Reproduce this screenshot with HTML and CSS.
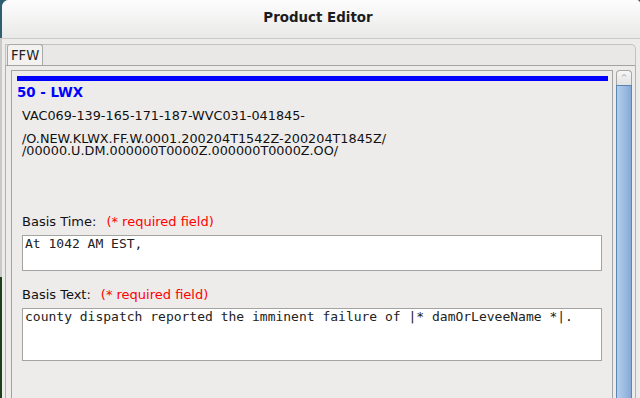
FILE: index.html
```html
<!DOCTYPE html>
<html lang="en">
<head>
    <title>Product Editor</title>
    <meta charset="utf-8">
    <link rel="stylesheet" href="styles.css">
</head>
<body>
    <div class="screen">
        <div class="edge">
            <div class="edge-top"></div>
            <div class="edge-mid"></div>
            <div class="edge-bottom"></div>
        </div>

        <div class="dialog">
            <div class="titlebar">Product Editor</div>

            <div class="tabs">
                <div class="tabbar">
                    <div class="tab">FFW</div>
                </div>

                <div class="tabpanel">
                    <div class="scroller">
                        <div class="content">
                            <div class="bar"></div>
                            <div class="segment">50 - LWX</div>
                            <div class="ugc">VAC069-139-165-171-187-WVC031-041845-</div>
                            <div class="vtec">/O.NEW.KLWX.FF.W.0001.200204T1542Z-200204T1845Z/<br>/00000.U.DM.000000T0000Z.000000T0000Z.OO/</div>

                            <div class="field first">
                                <div class="label">Basis Time:<span class="req">(* required field)</span></div>
                                <div class="input short">At 1042 AM EST,</div>
                            </div>

                            <div class="field">
                                <div class="label">Basis Text:<span class="req">(* required field)</span></div>
                                <div class="input tall">county dispatch reported the imminent failure of |* damOrLeveeName *|.</div>
                            </div>
                        </div>
                    </div>

                    <div class="vscroll">
                        <div class="arrow">&#8963;</div>
                        <div class="thumb"></div>
                    </div>
                </div>
            </div>
        </div>
    </div>
</body>
</html>
```

FILE: styles.css
```css
* {
    box-sizing: border-box;
}

body {
    margin: 0;
    overflow: hidden;
    background-color: #edeceb;
    font-family: "DejaVu Sans", "Liberation Sans", sans-serif;
    font-size: 13px;
    color: #111;
}

.screen {
    display: flex;
    height: 398px;
    background: linear-gradient(to bottom, #2f5f6e 0, #2f5f6e 38px, #edeceb 38px);
}

.edge {
    width: 2px;
    display: flex;
    flex-direction: column;
}

.edge-top {
    height: 38px;
    background-color: #2f5f6e;
}

.edge-mid {
    height: 239px;
    background-color: #c9c9c8;
}

.edge-bottom {
    flex: 1;
    background-color: #1b3f1c;
}

.dialog {
    flex: 1;
    display: flex;
    flex-direction: column;
    background-color: #edeceb;
    border-top-left-radius: 7px;
    border-top-right-radius: 4px;
    overflow: hidden;
}

.titlebar {
    height: 39px;
    padding: 10px 6px 0 0;
    text-align: center;
    font-weight: bold;
    font-size: 13.4px;
    line-height: 16px;
    color: #1c1c1c;
    background: linear-gradient(to bottom, #fdfdfd, #e9e9e8);
    border-bottom: 1px solid #cbcbc9;
}

.tabs {
    flex: 1;
    display: flex;
    flex-direction: column;
    padding: 5px 4px 0 3px;
}

.tabbar {
    height: 22px;
    display: flex;
    background-color: #e9e8e7;
    border: 1px solid #c2c2c1;
    border-bottom-color: #a3a3a2;
    border-top-right-radius: 5px;
}

.tab {
    width: 36px;
    margin-top: -1px;
    margin-left: 1px;
    padding: 2px 0 0 3px;
    font-size: 13.2px;
    line-height: 17px;
    color: #222;
    background-color: #f3f2f1;
    border: 1px solid #a9a9a8;
    border-bottom: none;
    border-radius: 3px 3px 0 0;
}

.tabpanel {
    flex: 1;
    display: flex;
    gap: 3px;
    padding: 4px 3px 0 5px;
    border-left: 1px solid #b1b1b0;
    border-right: 1px solid #b1b1b0;
}

.scroller {
    flex: 1;
    border: 1px solid #a2a2a1;
    border-bottom: none;
}

.content {
    padding: 5px 4px 0 5px;
}

.bar {
    height: 5px;
    background-color: #0000ff;
}

.segment {
    margin-top: 4px;
    font-weight: bold;
    font-size: 13.4px;
    line-height: 16px;
    color: #0000ff;
}

.ugc {
    margin: 7px 0 0 5px;
    font-size: 12.8px;
    line-height: 16px;
}

.vtec {
    margin: 9px 0 0 5px;
    font-size: 12.8px;
    line-height: 12px;
}

.field {
    margin: 16px 6px 0 5px;
}

.field.first {
    margin-top: 57px;
}

.label {
    line-height: 16px;
}

.req {
    margin-left: 10px;
    color: #ff0000;
}

.input {
    margin-top: 5px;
    padding: 0 2px;
    font-family: "DejaVu Sans Mono", "Liberation Mono", monospace;
    font-size: 13px;
    line-height: 16px;
    color: #222;
    background-color: #fff;
    border: 1px solid #a3a3a2;
}

.input.short {
    height: 36px;
}

.input.tall {
    height: 53px;
}

.vscroll {
    width: 16px;
    display: flex;
    flex-direction: column;
}

.arrow {
    height: 15px;
    text-align: center;
    font-size: 11px;
    line-height: 16px;
    color: #b9b9b9;
    background: linear-gradient(to bottom, #f7f7f7, #e2e2e2);
    border: 1px solid #a6a6a6;
    border-bottom: none;
    border-radius: 4px 4px 0 0;
}

.thumb {
    flex: 1;
    background: linear-gradient(to right, #b4cdeb, #94b5de 70%, #86a9d6);
    border: 1px solid #5d84b6;
    border-bottom: none;
}
```
